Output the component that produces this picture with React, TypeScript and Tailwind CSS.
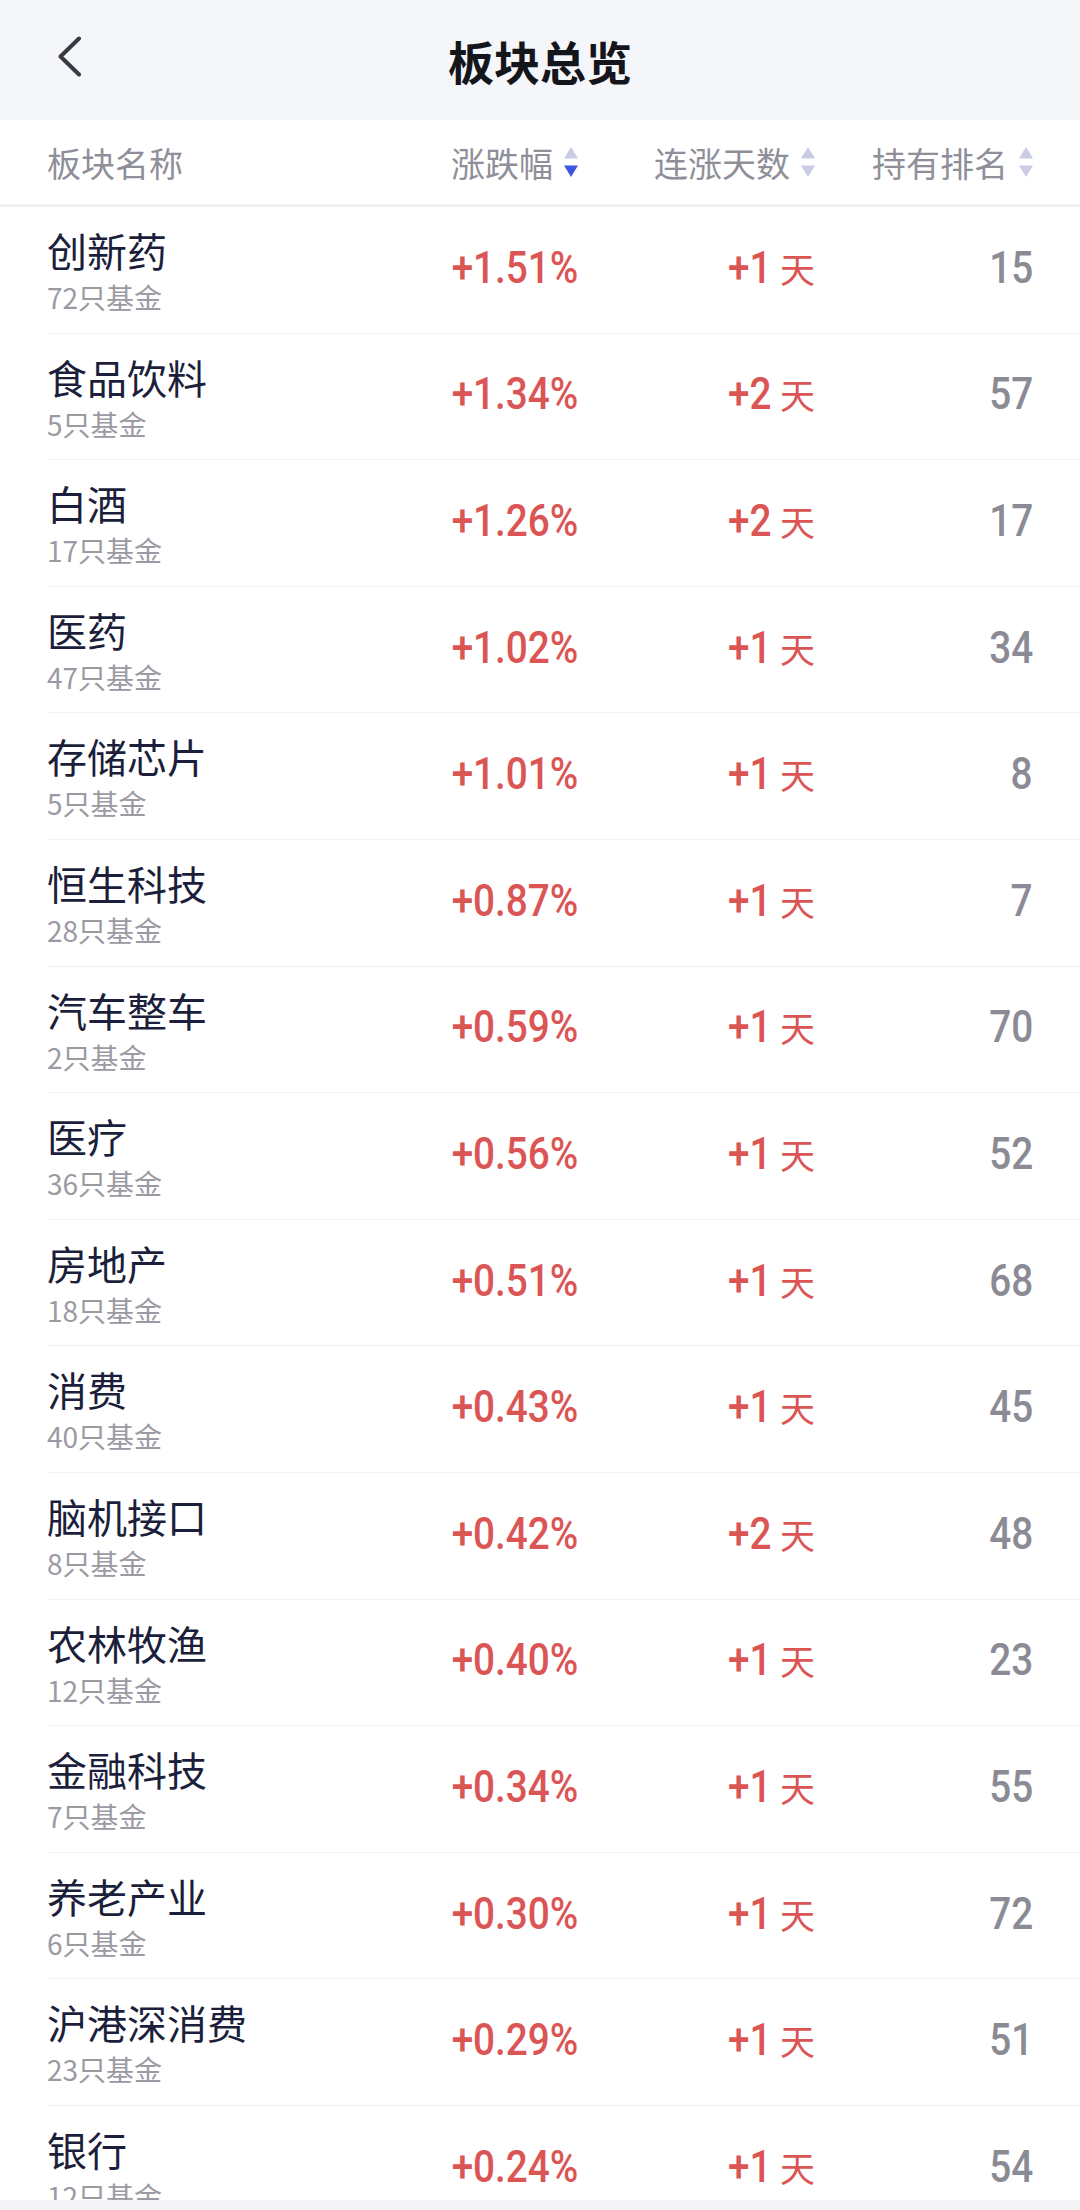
import React from "react";

type Row = { name: string; funds: number; pct: string; days: string; rank: number };

const rows: Row[] = [
  { name: "创新药", funds: 72, pct: "+1.51%", days: "+1", rank: 15 },
  { name: "食品饮料", funds: 5, pct: "+1.34%", days: "+2", rank: 57 },
  { name: "白酒", funds: 17, pct: "+1.26%", days: "+2", rank: 17 },
  { name: "医药", funds: 47, pct: "+1.02%", days: "+1", rank: 34 },
  { name: "存储芯片", funds: 5, pct: "+1.01%", days: "+1", rank: 8 },
  { name: "恒生科技", funds: 28, pct: "+0.87%", days: "+1", rank: 7 },
  { name: "汽车整车", funds: 2, pct: "+0.59%", days: "+1", rank: 70 },
  { name: "医疗", funds: 36, pct: "+0.56%", days: "+1", rank: 52 },
  { name: "房地产", funds: 18, pct: "+0.51%", days: "+1", rank: 68 },
  { name: "消费", funds: 40, pct: "+0.43%", days: "+1", rank: 45 },
  { name: "脑机接口", funds: 8, pct: "+0.42%", days: "+2", rank: 48 },
  { name: "农林牧渔", funds: 12, pct: "+0.40%", days: "+1", rank: 23 },
  { name: "金融科技", funds: 7, pct: "+0.34%", days: "+1", rank: 55 },
  { name: "养老产业", funds: 6, pct: "+0.30%", days: "+1", rank: 72 },
  { name: "沪港深消费", funds: 23, pct: "+0.29%", days: "+1", rank: 51 },
  { name: "银行", funds: 12, pct: "+0.24%", days: "+1", rank: 54 },
];

function SortIcon({ active }: { active?: boolean }) {
  return (
    <svg width="14" height="30" viewBox="0 0 14 30" className="ml-[11px] shrink-0">
      <path d="M7 0 L14 11.5 L0 11.5 Z" fill="#c9cce4" />
      <path d="M0 18.5 L14 18.5 L7 30 Z" fill={active ? "#3d55e0" : "#c9cce4"} />
    </svg>
  );
}

function HeadCell({ label, active }: { label: string; active?: boolean }) {
  return (
    <div className="flex items-center justify-end">
      <span>{label}</span>
      <SortIcon active={active} />
    </div>
  );
}

export default function App() {
  return (
    <div
      className="relative w-[1080px] h-[2210px] overflow-hidden bg-white flex flex-col"
      style={{ fontFamily: '"Noto Sans CJK SC", "Noto Sans", sans-serif' }}
    >
      {/* Top bar */}
      <div className="relative h-[120px] shrink-0 bg-[#f5f6fa] flex items-center justify-center">
        <svg
          width="26"
          height="41"
          viewBox="0 0 26 41"
          className="absolute left-[56px] top-[36px]"
        >
          <path
            d="M23 2.5 L4.5 20.5 L23 38.5"
            fill="none"
            stroke="#3a3a44"
            strokeWidth="4"
            strokeLinecap="round"
            strokeLinejoin="round"
          />
        </svg>
        <span className="text-[46px] font-bold text-[#15161c] leading-none">板块总览</span>
      </div>

      {/* Column header */}
      <div className="h-[87px] shrink-0 border-b-[3px] border-[#f1f1f4] grid grid-cols-[1fr_237px_237px_218px] items-center pl-[47px] pr-[47px] text-[34px] text-[#8f8f99]">
        <span>板块名称</span>
        <HeadCell label="涨跌幅" active />
        <HeadCell label="连涨天数" />
        <HeadCell label="持有排名" />
      </div>

      {/* Rows */}
      <div className="flex flex-col">
        {rows.map((r) => (
          <div
            key={r.name}
            className="ml-[47px] h-[126.6px] shrink-0 border-b border-[#f1f1f4] grid grid-cols-[1fr_237px_237px_218px] pr-[47px]"
          >
            <div className="flex flex-col pt-[19px]">
              <span className="text-[40px] leading-[48px] text-[#1c1f3b]">{r.name}</span>
              <span className="text-[28px] leading-[46px] text-[#9a9aa3]">{r.funds}只基金</span>
            </div>
            <div className="flex items-center justify-end pb-[4px]">
              <span
                className="inline-block origin-right scale-x-[0.86] text-[45px] font-medium leading-[60px] text-[#db5555]"
                style={{ fontFamily: "Roboto, sans-serif" }}
              >
                {r.pct}
              </span>
            </div>
            <div className="flex items-center justify-end pb-[4px]">
              <span className="flex items-baseline text-[#db5555]">
                <span
                  className="inline-block origin-right scale-x-[0.86] text-[45px] font-medium leading-[60px]"
                  style={{ fontFamily: "Roboto, sans-serif" }}
                >
                  {r.days}
                </span>
                <span className="ml-[8px] text-[35px] leading-[60px]">天</span>
              </span>
            </div>
            <div className="flex items-center justify-end pb-[4px]">
              <span
                className="inline-block origin-right scale-x-[0.86] text-[45px] font-medium leading-[60px] text-[#8b8b95]"
                style={{ fontFamily: "Roboto, sans-serif" }}
              >
                {r.rank}
              </span>
            </div>
          </div>
        ))}
      </div>

      {/* Bottom bar */}
      <div className="absolute left-0 right-0 bottom-0 h-[10px] bg-[#f4f4f6]" />
    </div>
  );
}
